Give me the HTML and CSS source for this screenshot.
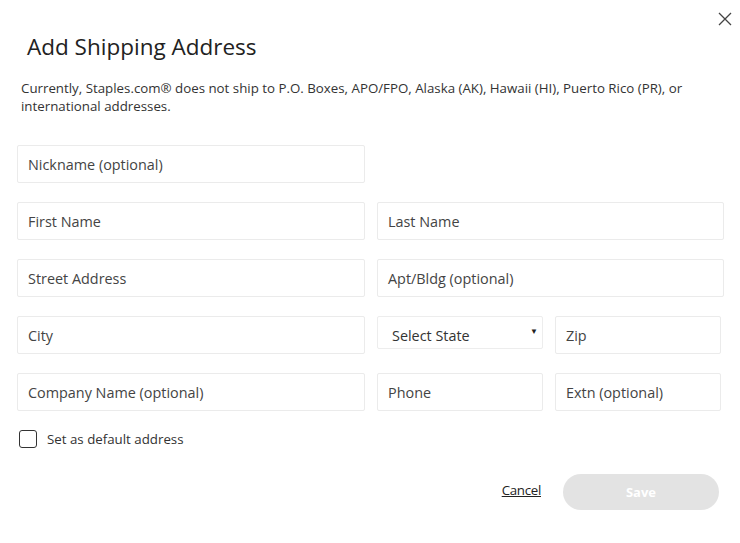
FILE: index.html
```html
<!DOCTYPE html>
<html>
<head>
<meta charset="utf-8">
<link rel="stylesheet" href="styles.css">
</head>
<body>
<div class="modal">
  <button class="close" aria-label="Close">
    <svg width="14" height="14" viewBox="0 0 14 14"><path d="M1 1L13 13M13 1L1 13" stroke="#444" stroke-width="1.3" fill="none"/></svg>
  </button>
  <h1 class="title">Add Shipping Address</h1>
  <p class="notice">Currently, Staples.com® does not ship to P.O. Boxes, APO/FPO, Alaska (AK), Hawaii (HI), Puerto Rico (PR), or international addresses.</p>
  <form class="form">
    <div class="row">
      <div class="field">Nickname (optional)</div>
      <div></div>
    </div>
    <div class="row">
      <div class="field">First Name</div>
      <div class="field">Last Name</div>
    </div>
    <div class="row">
      <div class="field">Street Address</div>
      <div class="field">Apt/Bldg (optional)</div>
    </div>
    <div class="row">
      <div class="field">City</div>
      <div class="split">
        <div class="select"><span>Select State</span><span class="arrow">▼</span></div>
        <div class="field">Zip</div>
      </div>
    </div>
    <div class="row">
      <div class="field">Company Name (optional)</div>
      <div class="split">
        <div class="field">Phone</div>
        <div class="field">Extn (optional)</div>
      </div>
    </div>
    <label class="check"><span class="box"></span><span class="check-label">Set as default address</span></label>
    <div class="actions">
      <a class="cancel" href="#">Cancel</a>
      <span class="save">Save</span>
    </div>
  </form>
</div>
</body>
</html>
```

FILE: styles.css
```css
html, body {
  margin: 0;
  padding: 0;
  background: #fff;
}
body {
  font-family: "Open Sans", "Noto Sans", "Liberation Sans", sans-serif;
  color: #333;
  width: 740px;
  height: 543px;
  overflow: hidden;
}
.modal {
  position: relative;
  padding: 0 16px 0 17px;
}
.close {
  position: absolute;
  top: 12px;
  right: 8px;
  border: 0;
  background: none;
  padding: 0;
  width: 14px;
  height: 14px;
}
.title {
  margin: 0;
  padding: 31px 0 0 10px;
  font-size: 22.5px;
  font-weight: 400;
  line-height: 32px;
  color: #222;
}
.notice {
  margin: 16px 0 0 4px;
  font-size: 13.3px;
  line-height: 18px;
  color: #333;
  width: 690px;
}
.form {
  margin-top: 30px;
  display: flex;
  flex-direction: column;
  gap: 19px;
}
.row {
  display: grid;
  grid-template-columns: 348px 347px;
  column-gap: 12px;
}
.split {
  display: grid;
  grid-template-columns: 166px 166px;
  column-gap: 12px;
  align-items: start;
}
.field {
  height: 38px;
  box-sizing: border-box;
  border: 1px solid #ebebeb;
  border-radius: 2px;
  padding: 0 10px;
  display: flex;
  align-items: center;
  font-size: 14.4px;
  color: #444;
}
.select {
  height: 33px;
  box-sizing: border-box;
  border: 1px solid #ededed;
  border-radius: 2px;
  padding: 6px 4px 0 14px;
  display: flex;
  align-items: center;
  justify-content: space-between;
  font-size: 14.4px;
  color: #333;
}
.arrow {
  font-size: 8px;
  margin-top: -10px;
  color: #222;
}
.check {
  display: flex;
  align-items: center;
  gap: 10px;
  margin-top: 0;
  padding-left: 2px;
}
.box {
  width: 18px;
  height: 18px;
  box-sizing: border-box;
  border: 1px solid #333;
  border-radius: 3px;
}
.check-label {
  font-size: 13.3px;
  color: #333;
}
.actions {
  display: flex;
  justify-content: flex-end;
  align-items: center;
  gap: 22px;
  margin-top: 7px;
  padding-right: 5px;
}
.cancel {
  font-size: 13.3px;
  color: #222;
  text-decoration: underline;
  letter-spacing: -0.3px;
  margin-bottom: 4px;
}
.save {
  width: 156px;
  height: 36px;
  border-radius: 18px;
  background: #e3e3e3;
  color: #fff;
  font-weight: 700;
  font-size: 13px;
  display: flex;
  align-items: center;
  justify-content: center;
}
```
